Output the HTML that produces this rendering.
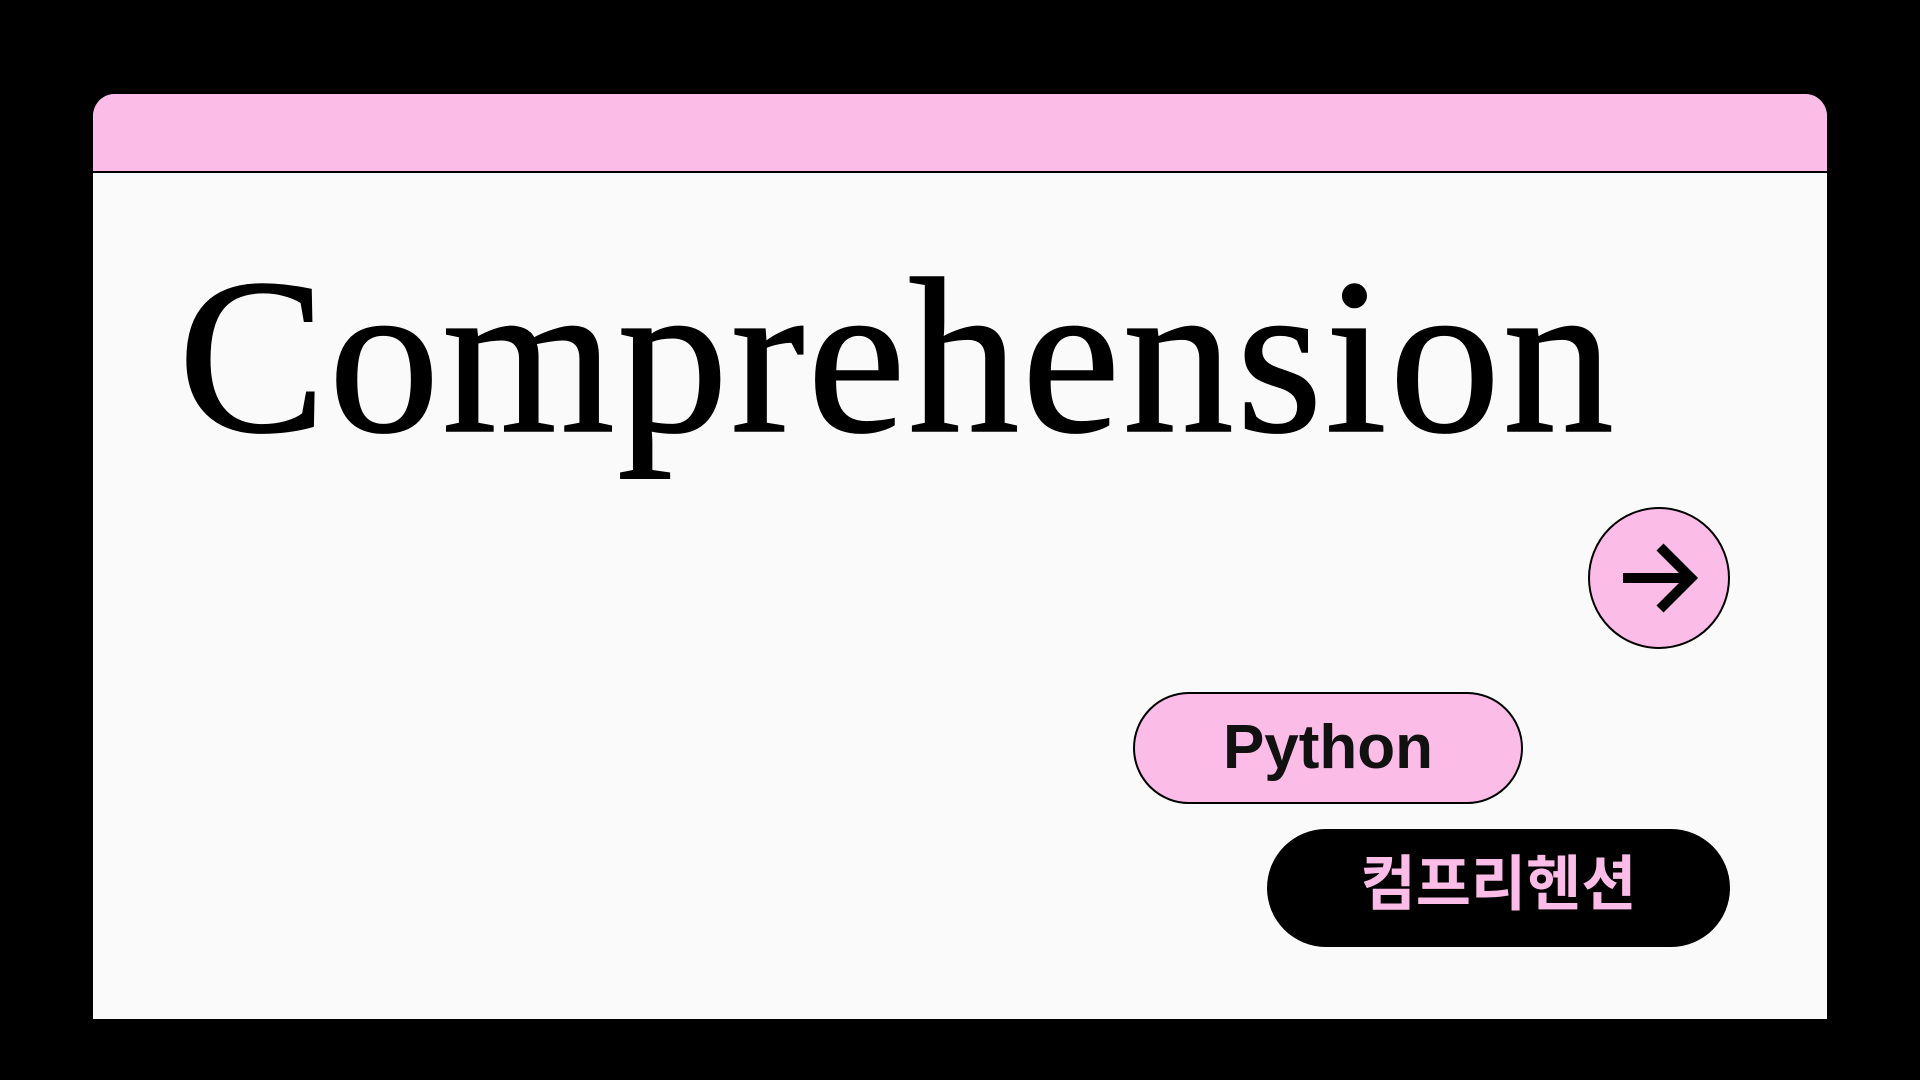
<!DOCTYPE html>
<html><head><meta charset="utf-8"><style>
html,body{margin:0;padding:0;background:#000;width:1920px;height:1080px;overflow:hidden}
.card{position:absolute;left:93px;top:94px;width:1734px;height:925px;background:#fafafa;border-radius:22px 22px 0 0;overflow:hidden}
.hdr{position:absolute;left:0;top:0;width:100%;height:77px;background:#fbbce8;border-bottom:2px solid #000}
.title{position:absolute;left:178px;top:246px;font-family:"Liberation Serif",serif;font-size:222px;line-height:1;color:#000;letter-spacing:2.5px;white-space:nowrap;-webkit-text-stroke:1.5px #000}
.circ{position:absolute;left:1588px;top:507px;width:142px;height:142px;border-radius:50%;background:#fbbce8;border:2px solid #000;box-sizing:border-box}
.py{position:absolute;left:1133px;top:692px;width:390px;height:112px;border-radius:56px;background:#fbbce8;border:2px solid #000;box-sizing:border-box;font-family:"Liberation Sans",sans-serif;font-weight:bold;font-size:62px;color:#111;text-align:center;line-height:108px}
.kr{position:absolute;left:1267px;top:829px;width:463px;height:118px;border-radius:59px;background:#000;font-family:"Liberation Sans","Noto Sans CJK KR",sans-serif;font-weight:bold;font-size:60px;color:#fbbce8;text-align:center;line-height:112px}
</style></head><body>
<div class="card"><div class="hdr"></div></div>
<div class="title">Comprehension</div>
<div class="circ"><svg width="138" height="138" viewBox="0 0 138 138"><path d="M33 69H100M70 38L101 69L70 100" fill="none" stroke="#000" stroke-width="10" stroke-linecap="butt" stroke-linejoin="miter"/></svg></div>
<div class="py">Python</div>
<div class="kr">컴프리헨션</div>
</body></html>
